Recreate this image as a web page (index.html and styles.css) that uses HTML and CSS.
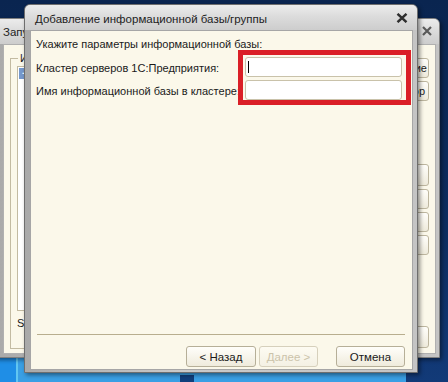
FILE: index.html
```html
<!DOCTYPE html>
<html lang="ru">
<head>
    <meta charset="UTF-8">
    <meta name="viewport" content="width=device-width, initial-scale=1.0">
    <title>Добавление информационной базы/группы</title>
    <link rel="stylesheet" href="styles.css">
</head>
<body>
    <div class="desktop">
        <div class="taskbar">
            <span class="tb-start"></span>
            <span class="tb-sep"></span>
            <span class="tb-fill"></span>
            <span class="tb-dark"></span>
            <span class="tb-fill2"></span>
        </div>

        <!-- окно запуска (на заднем плане) -->
        <div class="win back">
            <div class="win-title">
                <span class="title-text">Запуск 1С:Предприятия</span>
                <svg class="close back-close" width="10" height="10" viewBox="0 0 10 10">
                    <path d="M1 1 L9 9 M9 1 L1 9" stroke="#5a5a5a" stroke-width="2.2" fill="none"/>
                </svg>
            </div>
            <div class="win-body back-body">
                <div class="group">
                    <div class="group-legend">Информационные базы</div>
                    <div class="ib-list">
                        <div class="ib-row selected"><span class="tree-sign">−</span></div>
                    </div>
                    <div class="ib-path">S</div>
                </div>
                <div class="side-buttons">
                    <button class="bg-btn first">1С:Предприятие</button>
                    <button class="bg-btn second">Конфигуратор</button>
                    <button class="bg-btn gap">Добавить...</button>
                    <button class="bg-btn">Изменить...</button>
                    <button class="bg-btn">Удалить</button>
                    <button class="bg-btn">Настройка...</button>
                    <button class="bg-btn last">Выход</button>
                </div>
            </div>
        </div>

        <!-- диалог добавления базы -->
        <div class="win dialog">
            <div class="win-title dialog-title">
                <span class="title-text">Добавление информационной базы/группы</span>
                <svg class="close" width="12" height="10" viewBox="0 0 12 10">
                    <path d="M1.5 0.8 L10.5 9.2 M10.5 0.8 L1.5 9.2" stroke="#2e2e2e" stroke-width="2.4" fill="none"/>
                </svg>
            </div>
            <div class="win-body dialog-body">
                <div class="content">
                    <div class="hint">Укажите параметры информационной базы:</div>
                    <div class="params">
                        <label class="param-label">Кластер серверов 1С:Предприятия:</label>
                        <div class="field"><span class="caret"></span></div>
                        <label class="param-label">Имя информационной базы в кластере:</label>
                        <div class="field"></div>
                    </div>
                </div>
                <div class="footer">
                    <div class="separator"></div>
                    <div class="buttons">
                        <button class="btn">&lt; Назад</button>
                        <button class="btn next" disabled>Далее &gt;</button>
                        <button class="btn cancel">Отмена</button>
                    </div>
                </div>
                <div class="highlight"></div>
            </div>
        </div>
    </div>
</body>
</html>
```

FILE: styles.css
```css
body {
    margin: 0;
    padding: 0;
    font-family: "Liberation Sans", Arial, sans-serif;
    font-size: 11px;
    color: #1a1a1a;
    overflow: hidden;
}
.desktop {
    position: relative;
    width: 448px;
    height: 382px;
    overflow: hidden;
    background: linear-gradient(180deg, #0a2550 0%, #0d2d60 60%, #123a78 100%);
}
.taskbar {
    position: absolute;
    left: 0;
    bottom: 0;
    width: 406px;
    height: 24px;
    display: flex;
}
.tb-start {
    width: 16px;
    background: #1f8ee6;
}
.tb-sep {
    width: 2px;
    background: #62c6f2;
}
.tb-fill {
    width: 162px;
    background: #3a9fe4;
}
.tb-dark {
    width: 14px;
    background: linear-gradient(180deg, #3a9fe4 0%, #3a9fe4 70%, #103f7c 70%);
}
.tb-fill2 {
    flex: 1;
    background: #3a9fe4;
}

/* окна */
.win {
    position: absolute;
    box-sizing: border-box;
    display: flex;
    flex-direction: column;
    border: 1px solid #6e6e6e;
    border-radius: 6px 6px 0 0;
    background: linear-gradient(90deg, #a9a9a9, #c9c9c9 40%, #c4c4c4);
    box-shadow: 2px 2px 4px rgba(0, 0, 0, 0.45);
}
.win-title {
    display: flex;
    align-items: center;
    justify-content: space-between;
    background: linear-gradient(180deg, #ececec 0%, #dcdcdc 45%, #cdcdcd 100%);
    border-radius: 5px 5px 0 0;
    color: #222;
    font-size: 11.5px;
}
.win-body {
    position: relative;
    flex: 1;
    display: flex;
    background: #fbf8ea;
    border: 1px solid #9a9a9a;
}

.back {
    left: -6px;
    top: 18px;
    width: 446px;
    height: 340px;
    padding: 0 3px 3px 8px;
    border-color: #808080;
}
.back .win-title {
    height: 25px;
    margin-left: -8px;
    margin-right: -3px;
    padding-left: 8px;
    padding-right: 7px;
}
.back-body {
    padding: 0 6px 2px 6px;
    border-color: #b0b0b0;
}
.group {
    flex: 1;
    display: flex;
    flex-direction: column;
    position: relative;
    margin-top: 13px;
    margin-bottom: 2px;
    padding: 7px 8px 18px 6px;
    border: 1px solid #c3bba2;
}
.group-legend {
    position: absolute;
    top: -7px;
    left: 7px;
    padding: 0 2px;
    line-height: 12px;
    white-space: nowrap;
    background: #fbf8ea;
}
.ib-list {
    flex: 1;
    background: #fff;
    border: 1px solid #c3bba2;
    padding: 1px;
}
.ib-row {
    height: 11px;
    line-height: 11px;
    padding-left: 3px;
    white-space: nowrap;
}
.ib-row.selected {
    background: #7598cc;
    color: #fff;
}
.tree-sign {
    font-weight: bold;
}
.ib-path {
    margin-top: 5px;
    line-height: 14px;
}
.side-buttons {
    width: 112px;
    margin-left: 8px;
    display: flex;
    flex-direction: column;
}
.bg-btn {
    height: 20px;
    margin-top: 3px;
    font-family: "Liberation Sans", Arial, sans-serif;
    font-size: 11px;
    color: #1a1a1a;
    background: linear-gradient(180deg, #fffefa, #eeeadb);
    border: 1px solid #bdb69f;
    border-radius: 3px;
    padding: 0 1px;
}
.bg-btn.first {
    margin-top: 13px;
    text-align: right;
}
.bg-btn.second {
    text-align: right;
    padding-right: 3px;
}
.bg-btn.gap {
    margin-top: 63px;
    height: 22px;
}
.bg-btn.last {
    margin-top: auto;
    margin-bottom: 3px;
    height: 22px;
}
.back-close {
    margin-top: -1px;
}

.dialog {
    left: 24px;
    top: 4px;
    width: 394px;
    height: 369px;
    padding: 0 4px 2px 5px;
}
.dialog-title {
    height: 25px;
    margin: 0 -4px 0 -5px;
    padding: 3px 9px 0 10px;
    box-sizing: border-box;
}
.dialog-title .close {
    margin-top: -3px;
}
.dialog-body {
    flex-direction: column;
    padding: 6px 7px 2px 5px;
    border-color: #a6a6a6;
}
.hint {
    line-height: 14px;
}
.params {
    display: grid;
    grid-template-columns: 209px 157px;
    row-gap: 3px;
    margin-top: 6px;
}
.param-label {
    align-self: center;
    line-height: 14px;
    white-space: nowrap;
    padding-top: 2px;
}
.field {
    height: 20px;
    box-sizing: border-box;
    background: #fff;
    border: 1px solid #c9c2aa;
    border-radius: 3px;
    position: relative;
}
.caret {
    position: absolute;
    left: 2px;
    top: 3px;
    width: 1px;
    height: 12px;
    background: #000;
}
.footer {
    margin-top: auto;
}
.separator {
    height: 1px;
    margin-left: 1px;
    background: #b8ae8e;
}
.buttons {
    display: flex;
    justify-content: flex-end;
    margin-top: 11px;
}
.btn {
    height: 21px;
    font-family: "Liberation Sans", Arial, sans-serif;
    font-size: 11.5px;
    color: #1a1a1a;
    background: linear-gradient(180deg, #fffefa, #efebdc);
    border: 1px solid #b6af98;
    border-radius: 3px;
    padding: 0;
    width: 70px;
}
.btn.next {
    width: 59px;
    margin-left: 3px;
    color: #cbc3aa;
    border-color: #d6d0bc;
    background: linear-gradient(180deg, #fdfbf2, #f4f1e4);
}
.btn.cancel {
    width: 69px;
    margin-left: 18px;
}
.highlight {
    position: absolute;
    left: 207px;
    top: 19px;
    width: 173px;
    height: 55px;
    box-sizing: border-box;
    border: 5px solid #da1f27;
}
```
